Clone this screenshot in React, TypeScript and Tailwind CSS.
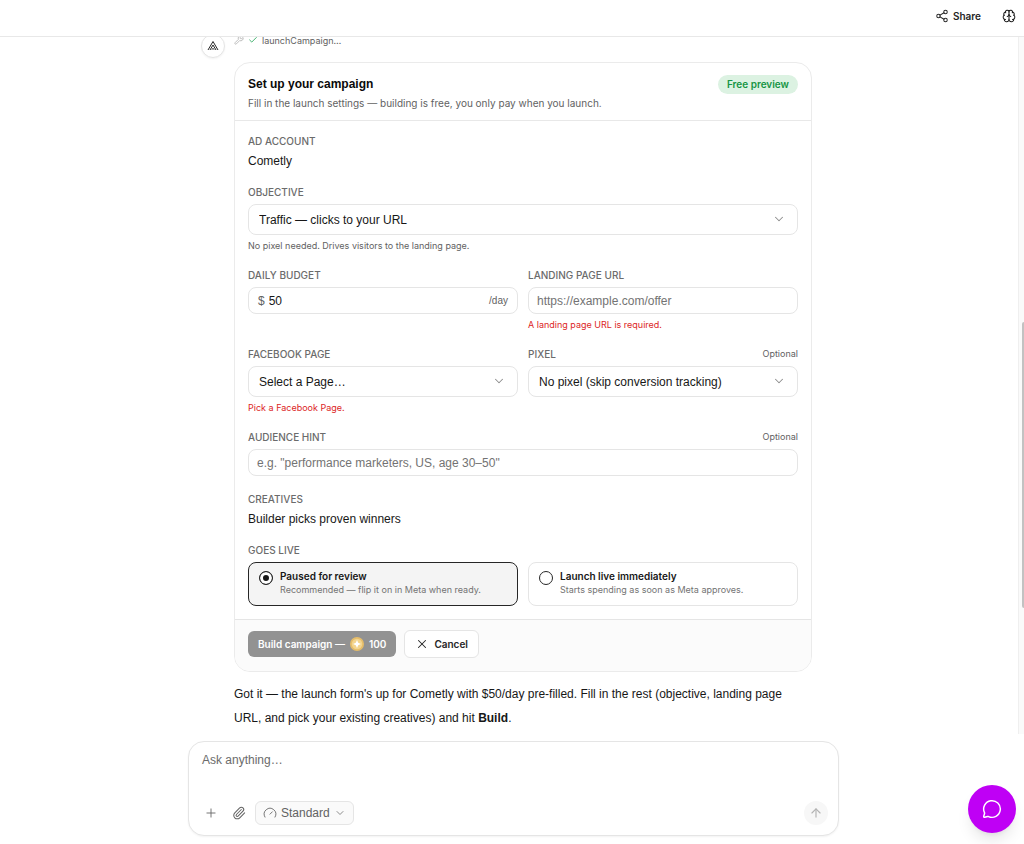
import { useState } from 'react';
import type { ReactNode } from 'react';
import {
  ArrowUp,
  Brain,
  Check,
  ChevronDown,
  Gauge,
  MessageCircle,
  Paperclip,
  Plus,
  Share2,
  Wrench,
  X,
} from 'lucide-react';
import { clsx } from 'clsx';

const bodyFont = "font-['Liberation_Sans',Arial,sans-serif]";
const labelClass = 'text-[10px] leading-[14px] font-medium text-[#6b6b6b]';
const valueClass = clsx(bodyFont, 'text-xs leading-4 text-[#171717]');
const fieldClass = clsx(
  bodyFont,
  'w-full rounded-lg border border-[#e5e5e5] bg-white text-xs outline-none placeholder:text-[#737373]',
);

function Field({
  label,
  id,
  optional,
  hint,
  error,
  children,
}: {
  label: string;
  id?: string;
  optional?: boolean;
  hint?: string;
  error?: string;
  children: ReactNode;
}) {
  return (
    <div className="flex min-w-0 flex-col gap-[5px]">
      <div className="flex items-center justify-between">
        {id ? (
          <label htmlFor={id} className={labelClass}>
            {label}
          </label>
        ) : (
          <span className={labelClass}>{label}</span>
        )}
        {optional && (
          <span className="text-[9px] leading-[14px] text-[#626262]">Optional</span>
        )}
      </div>
      {children}
      {hint && <p className="text-[9px] leading-3 text-[#626262]">{hint}</p>}
      {error && <p className="text-[9px] leading-3 text-[#dc2626]">{error}</p>}
    </div>
  );
}

function SelectBox({ id, options }: { id: string; options: string[] }) {
  return (
    <div className="relative">
      <select
        id={id}
        className={clsx(fieldClass, 'h-[31px] appearance-none px-2.5 text-[#171717]')}
      >
        {options.map((option) => (
          <option key={option}>{option}</option>
        ))}
      </select>
      <ChevronDown
        className="pointer-events-none absolute top-2 right-3 size-3.5 text-[#8c8c8c]"
        strokeWidth={1.75}
      />
    </div>
  );
}

function LaunchOption({
  title,
  description,
  checked,
  onSelect,
}: {
  title: string;
  description: string;
  checked: boolean;
  onSelect: () => void;
}) {
  return (
    <label
      className={clsx(
        'flex h-11 gap-[7px] rounded-lg border px-2.5 pt-1.5',
        checked ? 'border-[#262626] bg-[#f4f4f4]' : 'border-[#e5e5e5] bg-white',
      )}
    >
      <input
        type="radio"
        name="goes-live"
        checked={checked}
        onChange={onSelect}
        className="mt-0.5 size-3.5 shrink-0 appearance-none rounded-full border border-[#262626] bg-white checked:bg-[#171717] checked:shadow-[inset_0_0_0_3px_#fff]"
      />
      <span className="flex min-w-0 flex-col">
        <span className="text-[10px] leading-[14px] font-semibold text-[#171717]">{title}</span>
        <span className="text-[9px] leading-[14px] text-[#737373]">{description}</span>
      </span>
    </label>
  );
}

function Logo() {
  return (
    <svg viewBox="0 0 24 24" className="size-3" fill="none" stroke="#262626" strokeWidth="2">
      <path d="M2 20 L12 3 L22 20" />
      <path d="M6 20 L12 10 L18 20" />
      <path d="M9.5 20 L12 16 L14.5 20" strokeWidth="1.4" />
    </svg>
  );
}

function Coin() {
  return (
    <svg viewBox="0 0 16 16" className="size-3.5">
      <circle cx="8" cy="8" r="8" fill="#e6bd69" />
      <circle cx="8" cy="8" r="6" fill="#f3d58f" />
      <path d="M8 3.5 L9.4 6.6 L12.5 8 L9.4 9.4 L8 12.5 L6.6 9.4 L3.5 8 L6.6 6.6 Z" fill="#fff" />
    </svg>
  );
}

function CampaignForm() {
  const [mode, setMode] = useState('paused');

  return (
    <form className="overflow-hidden rounded-2xl border border-[#ebebeb] bg-white">
      <div className="flex items-start justify-between border-b border-[#e8e8e8] px-[13px] pt-3 pb-[9px]">
        <div>
          <h2 className={clsx(bodyFont, 'text-xs leading-[18px] font-semibold text-[#0a0a0a]')}>
            Set up your campaign
          </h2>
          <p className="mt-0.5 text-[10px] leading-4 text-[#626262]">
            Fill in the launch settings — building is free, you only pay when you launch.
          </p>
        </div>
        <span className="rounded-full bg-[#dcf2e2] px-[9px] text-[10px] leading-[19px] font-semibold text-[#169544]">
          Free preview
        </span>
      </div>

      <div className="flex flex-col gap-4 p-[13px]">
        <Field label="AD ACCOUNT">
          <p className={valueClass}>Cometly</p>
        </Field>
        <Field
          label="OBJECTIVE"
          id="objective"
          hint="No pixel needed. Drives visitors to the landing page."
        >
          <SelectBox id="objective" options={['Traffic — clicks to your URL']} />
        </Field>
        <div className="grid grid-cols-2 gap-2.5">
          <Field label="DAILY BUDGET" id="budget">
            <div className={clsx(fieldClass, 'flex h-[27px] items-center px-[9px]')}>
              <span className="text-[#626262]">$</span>
              <input
                id="budget"
                defaultValue="50"
                className="ml-1 w-full min-w-0 text-[#171717] outline-none"
              />
              <span className="text-[10px] text-[#626262]">/day</span>
            </div>
          </Field>
          <Field label="LANDING PAGE URL" id="url" error="A landing page URL is required.">
            <input
              id="url"
              type="url"
              placeholder="https://example.com/offer"
              className={clsx(fieldClass, 'h-[27px] px-2')}
            />
          </Field>
        </div>
        <div className="grid grid-cols-2 gap-2.5">
          <Field label="FACEBOOK PAGE" id="page" error="Pick a Facebook Page.">
            <SelectBox id="page" options={['Select a Page…']} />
          </Field>
          <Field label="PIXEL" id="pixel" optional>
            <SelectBox id="pixel" options={['No pixel (skip conversion tracking)']} />
          </Field>
        </div>
        <Field label="AUDIENCE HINT" id="audience" optional>
          <input
            id="audience"
            placeholder='e.g. "performance marketers, US, age 30–50"'
            className={clsx(fieldClass, 'h-[27px] px-2')}
          />
        </Field>
        <Field label="CREATIVES">
          <p className={valueClass}>Builder picks proven winners</p>
        </Field>
        <Field label="GOES LIVE">
          <div className="grid grid-cols-2 gap-2.5">
            <LaunchOption
              title="Paused for review"
              description="Recommended — flip it on in Meta when ready."
              checked={mode === 'paused'}
              onSelect={() => setMode('paused')}
            />
            <LaunchOption
              title="Launch live immediately"
              description="Starts spending as soon as Meta approves."
              checked={mode === 'live'}
              onSelect={() => setMode('live')}
            />
          </div>
        </Field>
      </div>

      <div className="flex items-center gap-2 border-t border-[#e5e5e5] bg-[#fbfbfb] px-[13px] pt-2.5 pb-[13px] text-[10px] font-semibold">
        <button
          type="submit"
          className="flex h-[26px] items-center rounded-md bg-[#929292] px-2.5 text-white"
        >
          Build campaign —
          <span className="mx-[5px]">
            <Coin />
          </span>
          100
        </button>
        <button
          type="button"
          className="flex h-7 items-center gap-[5px] rounded-md border border-[#e5e5e5] bg-white px-2.5 text-[#262626]"
        >
          <X className="size-3.5" strokeWidth={1.75} />
          Cancel
        </button>
      </div>
    </form>
  );
}

function Composer() {
  return (
    <div className="mx-auto flex w-full max-w-[651px] flex-col rounded-2xl border border-[#e5e5e5] bg-white py-2.5 pr-2.5 pl-3 shadow-xs">
      <textarea
        aria-label="Message"
        placeholder="Ask anything…"
        className={clsx(
          bodyFont,
          'h-[49px] w-full resize-none px-px text-xs leading-4 outline-none placeholder:text-[#6b6b6b]',
        )}
      />
      <div className="flex items-center text-[#626262]">
        <button aria-label="Add" className="flex size-5 items-center justify-center">
          <Plus className="size-3.5" strokeWidth={1.5} />
        </button>
        <button aria-label="Attach file" className="ml-2 flex size-5 items-center justify-center">
          <Paperclip className="size-3.5" strokeWidth={1.75} />
        </button>
        <button
          className={clsx(
            bodyFont,
            'ml-1.5 flex h-6 items-center gap-1 rounded-md border border-[#e5e5e5] bg-[#fafafa] px-[7px] text-xs',
          )}
        >
          <Gauge className="size-3.5" strokeWidth={1.5} />
          Standard
          <ChevronDown className="size-3 text-[#8c8c8c]" />
        </button>
        <button
          aria-label="Send"
          className="ml-auto flex size-6 items-center justify-center rounded-full bg-[#f7f7f7] text-[#b3b3b3]"
        >
          <ArrowUp className="size-3.5" />
        </button>
      </div>
    </div>
  );
}

export default function App() {
  return (
    <div className="flex h-screen flex-col bg-white font-[Inter,sans-serif] text-[#171717]">
      <header className="flex h-[37px] shrink-0 items-center justify-end gap-[21px] border-b border-[#e8e8e8] pr-2 pb-1">
        <button className="flex items-center gap-1 text-[10px] font-semibold text-[#262626]">
          <Share2 className="size-3.5" strokeWidth={1.75} />
          Share
        </button>
        <button aria-label="Memory">
          <Brain className="size-3.5" strokeWidth={1.75} />
        </button>
      </header>

      <main className="flex min-h-0 flex-1 overflow-hidden">
        <div className="min-w-0 flex-1 pr-[5px]">
          <div className="mx-auto -mt-[3px] flex max-w-[611px] gap-[9px]">
            <div className="flex size-6 shrink-0 items-center justify-center rounded-full border border-[#e5e5e5] bg-white shadow-xs">
              <Logo />
            </div>
            <div className="min-w-0 flex-1">
              <div className="flex h-7 items-start gap-1 text-[9px] leading-[14px] text-[#626262]">
                <Wrench className="mt-px size-2.5 text-[#b3b3b3]" />
                <Check className="mt-px size-2.5 text-[#22a355]" />
                launchCampaign…
              </div>
              <CampaignForm />
              <p className={clsx(bodyFont, 'mt-2.5 pr-3 text-xs leading-6')}>
                Got it — the launch form's up for Cometly with $50/day pre-filled. Fill in the rest
                (objective, landing page URL, and pick your existing creatives) and hit{' '}
                <strong className="font-semibold">Build</strong>.
              </p>
            </div>
          </div>
        </div>
        <div className="w-1.5 border-l border-[#efefef] bg-[#fafafa] pt-[285px]">
          <div className="ml-auto h-[286px] w-0.5 rounded-l-full bg-[#c2c2c2]" />
        </div>
      </main>

      <footer className="shrink-0 pt-[7px] pb-2 pl-[3px]">
        <Composer />
      </footer>

      <button
        aria-label="Open chat"
        className="fixed right-2 bottom-[11px] flex size-12 items-center justify-center rounded-full bg-[#bf00f5] text-white shadow-lg"
      >
        <MessageCircle className="size-5" strokeWidth={1.75} />
      </button>
    </div>
  );
}
